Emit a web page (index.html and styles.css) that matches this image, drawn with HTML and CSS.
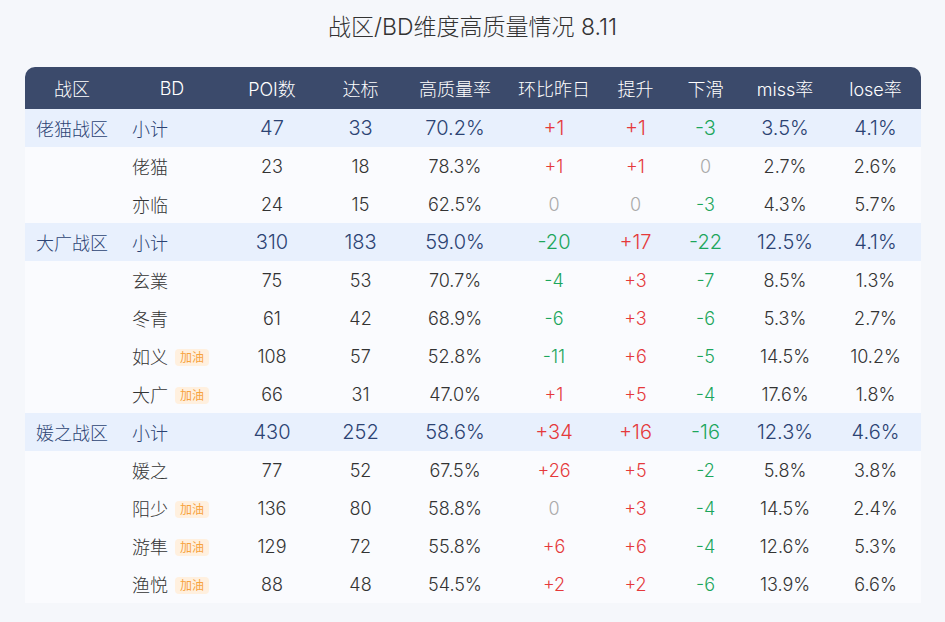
FILE: index.html
```html
<!DOCTYPE html>
<html lang="zh">
<head>
<meta charset="utf-8">
<title>战区/BD维度高质量情况 8.11</title>
<link rel="stylesheet" href="styles.css">
</head>
<body>
<h1 class="title">战区/BD维度高质量情况 8.11</h1>
<div class="card">
<table class="grid">
<colgroup>
<col class="c1"><col class="c2"><col class="c3"><col class="c4"><col class="c5"><col class="c6"><col class="c7"><col class="c8"><col class="c9"><col class="c10">
</colgroup>
<thead>
<tr><th>战区</th><th>BD</th><th>POI数</th><th>达标</th><th>高质量率</th><th>环比昨日</th><th>提升</th><th>下滑</th><th>miss率</th><th>lose率</th></tr>
</thead>
<tbody>
<tr class="sub"><td class="zone">佬猫战区</td><td class="bd">小计</td><td>47</td><td>33</td><td>70.2%</td><td class="up">+1</td><td class="up">+1</td><td class="down">-3</td><td>3.5%</td><td>4.1%</td></tr>
<tr><td></td><td class="bd">佬猫</td><td>23</td><td>18</td><td>78.3%</td><td class="up">+1</td><td class="up">+1</td><td class="zero">0</td><td>2.7%</td><td>2.6%</td></tr>
<tr><td></td><td class="bd">亦临</td><td>24</td><td>15</td><td>62.5%</td><td class="zero">0</td><td class="zero">0</td><td class="down">-3</td><td>4.3%</td><td>5.7%</td></tr>
<tr class="sub"><td class="zone">大广战区</td><td class="bd">小计</td><td>310</td><td>183</td><td>59.0%</td><td class="down">-20</td><td class="up">+17</td><td class="down">-22</td><td>12.5%</td><td>4.1%</td></tr>
<tr><td></td><td class="bd">玄業</td><td>75</td><td>53</td><td>70.7%</td><td class="down">-4</td><td class="up">+3</td><td class="down">-7</td><td>8.5%</td><td>1.3%</td></tr>
<tr><td></td><td class="bd">冬青</td><td>61</td><td>42</td><td>68.9%</td><td class="down">-6</td><td class="up">+3</td><td class="down">-6</td><td>5.3%</td><td>2.7%</td></tr>
<tr><td></td><td class="bd">如义<span class="tag">加油</span></td><td>108</td><td>57</td><td>52.8%</td><td class="down">-11</td><td class="up">+6</td><td class="down">-5</td><td>14.5%</td><td>10.2%</td></tr>
<tr><td></td><td class="bd">大广<span class="tag">加油</span></td><td>66</td><td>31</td><td>47.0%</td><td class="up">+1</td><td class="up">+5</td><td class="down">-4</td><td>17.6%</td><td>1.8%</td></tr>
<tr class="sub"><td class="zone">媛之战区</td><td class="bd">小计</td><td>430</td><td>252</td><td>58.6%</td><td class="up">+34</td><td class="up">+16</td><td class="down">-16</td><td>12.3%</td><td>4.6%</td></tr>
<tr><td></td><td class="bd">媛之</td><td>77</td><td>52</td><td>67.5%</td><td class="up">+26</td><td class="up">+5</td><td class="down">-2</td><td>5.8%</td><td>3.8%</td></tr>
<tr><td></td><td class="bd">阳少<span class="tag">加油</span></td><td>136</td><td>80</td><td>58.8%</td><td class="zero">0</td><td class="up">+3</td><td class="down">-4</td><td>14.5%</td><td>2.4%</td></tr>
<tr><td></td><td class="bd">游隼<span class="tag">加油</span></td><td>129</td><td>72</td><td>55.8%</td><td class="up">+6</td><td class="up">+6</td><td class="down">-4</td><td>12.6%</td><td>5.3%</td></tr>
<tr><td></td><td class="bd">渔悦<span class="tag">加油</span></td><td>88</td><td>48</td><td>54.5%</td><td class="up">+2</td><td class="up">+2</td><td class="down">-6</td><td>13.9%</td><td>6.6%</td></tr>
</tbody>
</table>
</div>
</body>
</html>
```
FILE: styles.css
```css
html, body {
  margin: 0;
  padding: 0;
}
body {
  background: #f5f7fb;
  font-family: Inter, "Noto Sans CJK SC", sans-serif;
  font-weight: 300;
  color: #333;
}
.title {
  margin: 12px 0 25px;
  line-height: 30px;
  font-size: 23px;
  font-weight: 300;
  text-align: center;
  color: #333;
}
.card {
  margin: 0 24px 0 25px;
  border-radius: 10px 10px 0 0;
  overflow: hidden;
  background: #fafbfe;
}
.grid {
  width: 896px;
  table-layout: fixed;
  border-collapse: collapse;
}
.c1 { width: 94px; }
.c2 { width: 106px; }
.c3 { width: 94px; }
.c4 { width: 83px; }
.c5 { width: 106px; }
.c6 { width: 92px; }
.c7 { width: 71px; }
.c8 { width: 69px; }
.c9 { width: 90px; }
.c10 { width: 91px; }
.grid th {
  height: 42px;
  padding: 0;
  background: #3b4a6b;
  color: #fff;
  font-size: 18px;
  font-weight: 300;
  text-align: center;
}
.grid td {
  height: 38px;
  padding: 0;
  font-size: 18px;
  text-align: center;
  white-space: nowrap;
  color: #333;
}
.grid td.bd {
  text-align: left;
  padding-left: 13px;
  font-size: 18px;
}
.grid tr.sub td {
  background: #e8f0fd;
  color: #2c4373;
  font-size: 20px;
}
.grid tr.sub td.zone,
.grid tr.sub td.bd {
  font-size: 18px;
}
.grid td.up, .grid tr.sub td.up { color: #e5393b; }
.grid td.down, .grid tr.sub td.down { color: #1ca65c; }
.grid td.zero { color: #aaa; }
.tag {
  display: inline-block;
  margin-left: 7px;
  padding: 0 5px;
  height: 17px;
  line-height: 17px;
  border-radius: 4px;
  background: #fff0df;
  color: #f7a23e;
  font-size: 12px;
  font-weight: 400;
  vertical-align: 2px;
}
```
